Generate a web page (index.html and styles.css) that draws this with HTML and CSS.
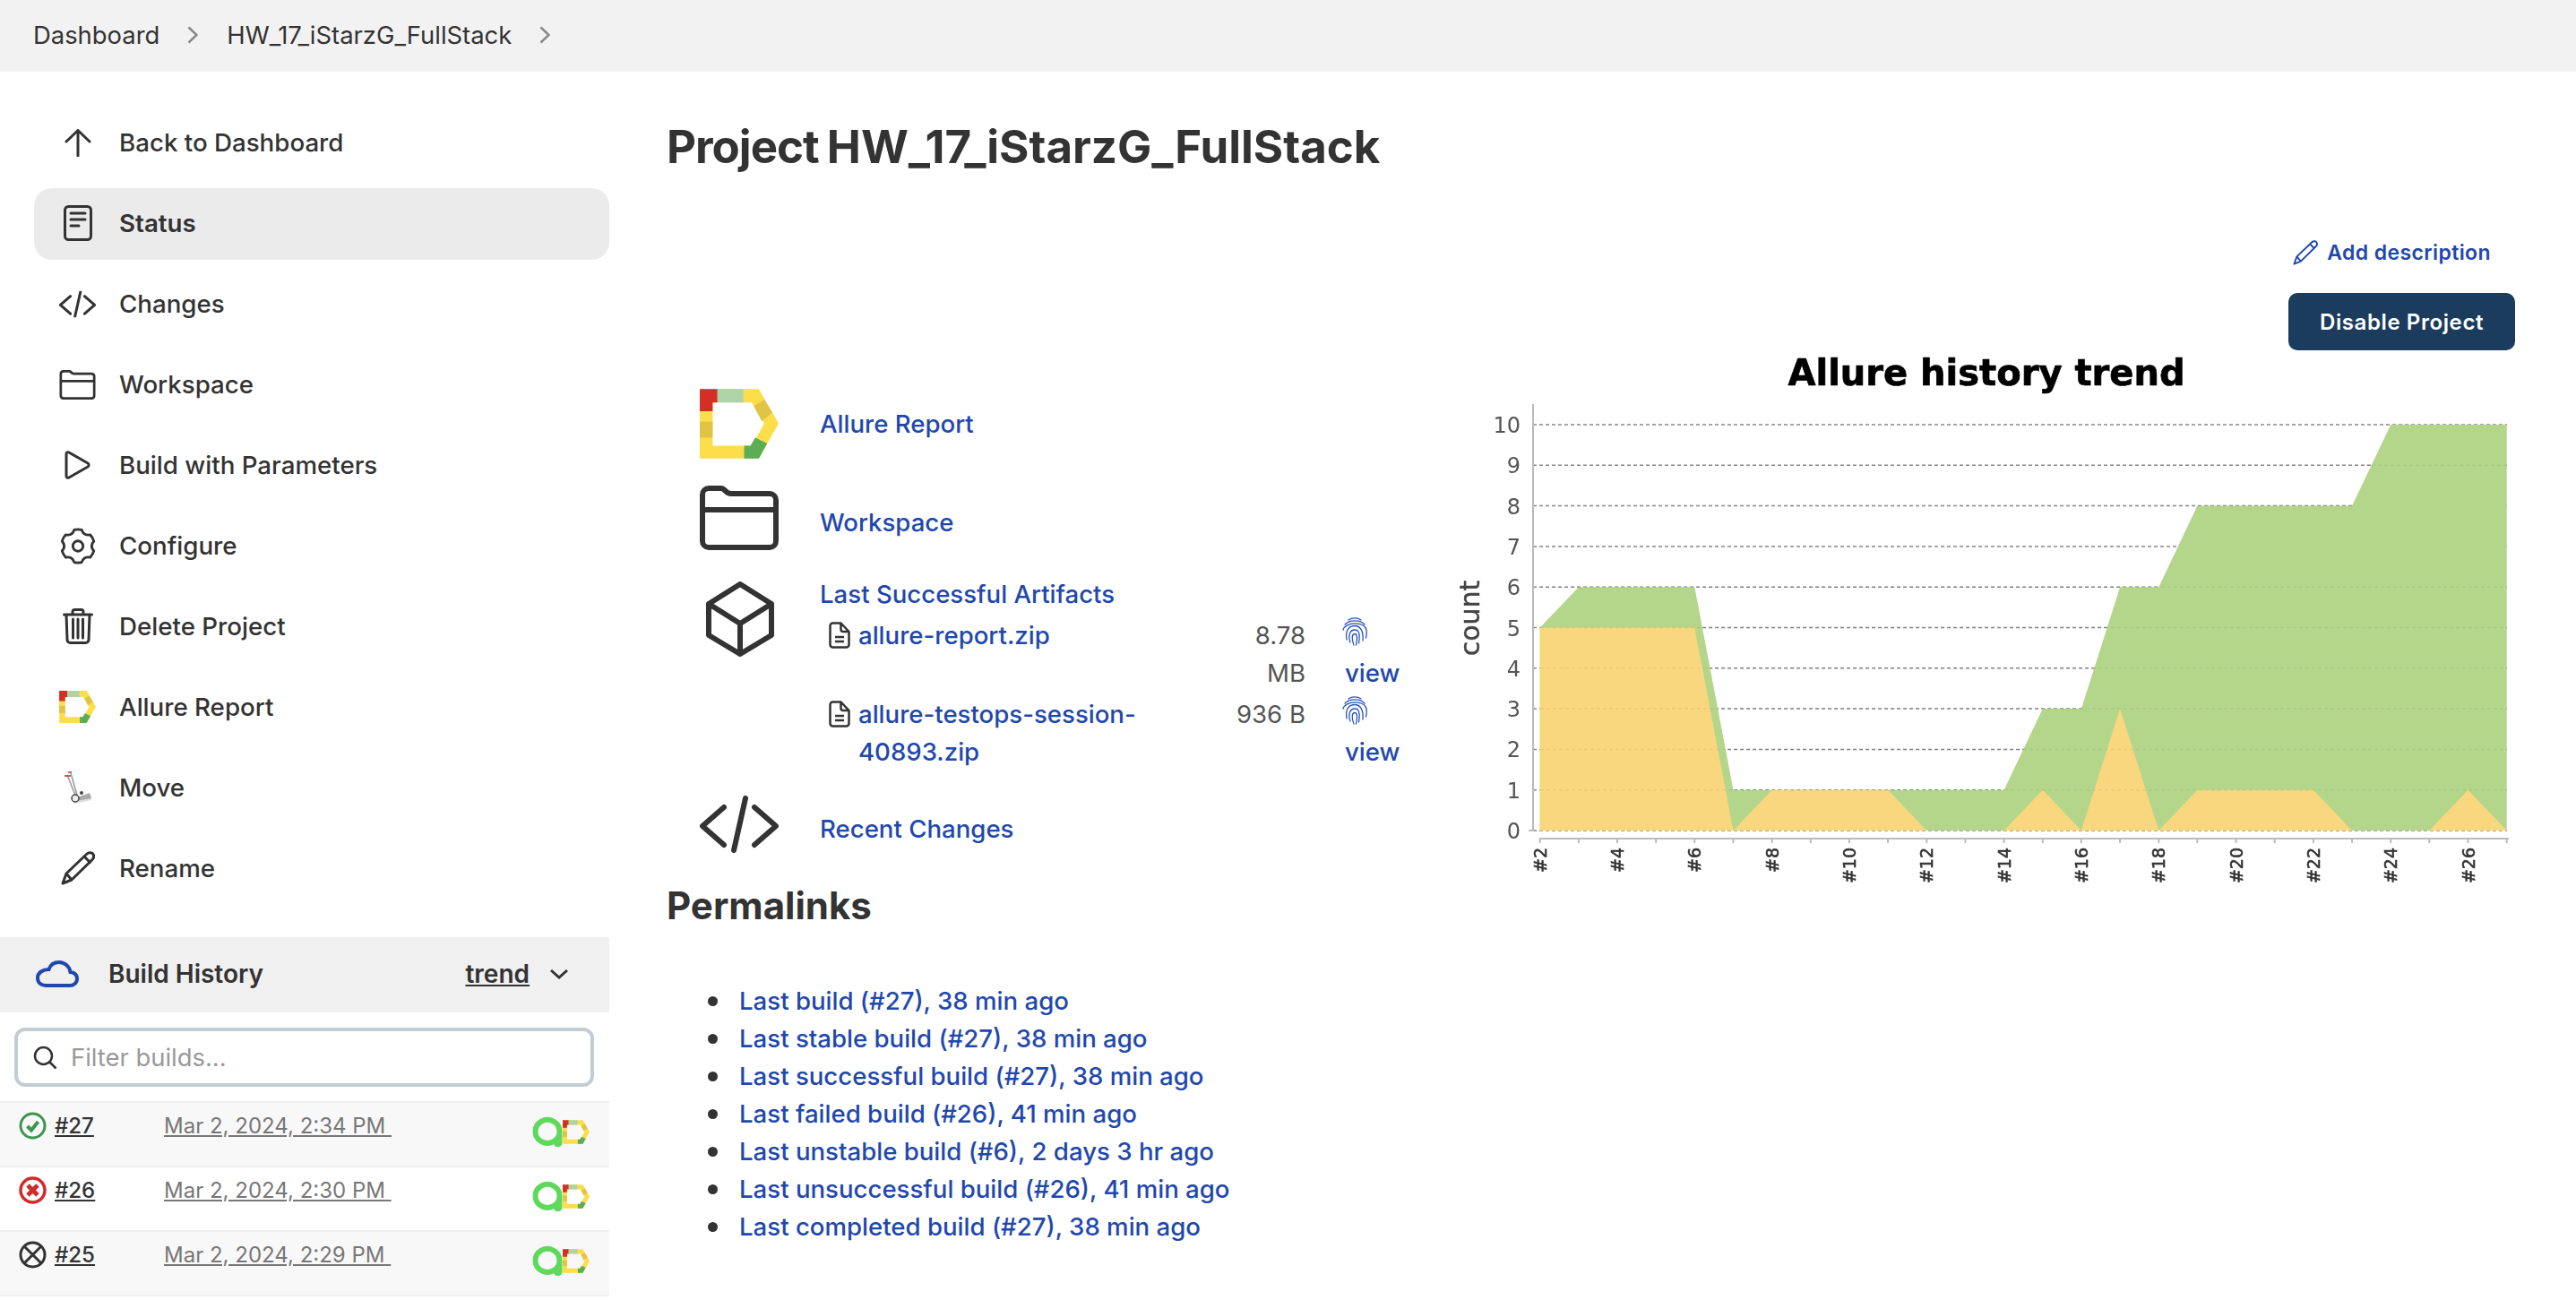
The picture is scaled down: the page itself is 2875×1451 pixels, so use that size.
FILE: index.html
```html
<!DOCTYPE html>
<html lang="en">
<head>
<meta charset="utf-8">
<title>HW_17_iStarzG_FullStack</title>
<link rel="stylesheet" href="styles.css">
</head>
<body>
<svg class="defs" width="0" height="0" aria-hidden="true">
  <defs>
    <symbol id="allure-d" viewBox="65 43 263 232">
      <path class="d-yellow" fill-rule="evenodd" d="M65 43H262L328 158 262 275H65ZM108 88V232H238L280 158 238 88Z"/>
      <path class="d-red" d="M65 43H124V88H108V117H65Z"/>
      <path class="d-pale" d="M124 43H210V88H124Z"/>
      <path class="d-mustard" d="M65 152H108V205H65Z"/>
      <path class="d-mustard" d="M245 100 280 78 308 122 272 150Z"/>
      <path class="d-green" d="M213 232H234L250 205 290 225 262 275H213Z"/>
    </symbol>
    <symbol id="allure-a" viewBox="0 0 34 34">
      <path class="a-ring" d="M30.500 17A13.500 13 0 1 1 30.500 16.900V29a2 2 0 0 1-3 2"/>
    </symbol>
    <symbol id="finger" viewBox="0 0 30 34">
      <g class="finger-lines">
        <path d="M8 4C12 1.200 18 1.200 22 4"/>
        <path d="M4 9C9 3.500 21 3.500 26 9"/>
        <path d="M2 15C4 6 26 5 28 15C28.500 18 28.200 21 27.500 24"/>
        <path d="M6 26C4 15 9 10.500 15 10.500S25 16 24 27"/>
        <path d="M10 29C7 21 10 15 15 15S21 20 19.500 30"/>
        <path d="M14 32C11 25 12 19.500 15 19.500S18 24 16.500 32"/>
      </g>
    </symbol>
    <symbol id="doc" viewBox="0 0 24 30">
      <path class="line-2" d="M13.500 1.500H4.500A3 3 0 0 0 1.500 4.500V25.500A3 3 0 0 0 4.500 28.500H19.500A3 3 0 0 0 22.500 25.500V11ZM13.500 1.500V8.500A2.500 2.500 0 0 0 16 11H22.500M7 17H17M7 22H17"/>
    </symbol>
    <symbol id="pencil" viewBox="0 0 38 38">
      <path d="M2 36 6 25 29 3C31 1 35 1.500 36 3.500S36.500 8 35 9.500L12 32ZM6 25 12 32M26 6 32.500 12.500"/>
    </symbol>
    <symbol id="code" viewBox="0 0 88 64">
      <path d="M27 13 3 34 27 55M61 13 85 34 61 55M51 3 38 61"/>
    </symbol>
    <symbol id="folder" viewBox="0 0 88 72">
      <path d="M10 3H24C28 3 29 9 35 9H78A7 7 0 0 1 85 16V62A7 7 0 0 1 78 69H10A7 7 0 0 1 3 62V10A7 7 0 0 1 10 3ZM3 27H85"/>
    </symbol>
  </defs>
</svg>

<nav class="crumbs">
  <a class="crumb">Dashboard</a>
  <svg class="crumb-arrow" viewBox="0 0 12 20"><path d="M1.500 1.500 10.500 10 1.500 18.500"/></svg>
  <a class="crumb">HW_17_iStarzG_FullStack</a>
  <svg class="crumb-arrow" viewBox="0 0 12 20"><path d="M1.500 1.500 10.500 10 1.500 18.500"/></svg>
</nav>

<div class="page">
  <aside class="side">
    <ul class="tasks">
      <li class="task"><span class="task-icon"><svg class="stroke" width="30" height="31" viewBox="0 0 30 31"><path d="M15 30V2M2 14 15 1.500 28 14"/></svg></span>Back to Dashboard</li>
      <li class="task task-active"><span class="task-icon"><svg class="stroke" width="32" height="40" viewBox="0 0 32 40"><rect x="1.500" y="1.500" width="29" height="37" rx="4"/><path d="M8 9H24M8 16H24M8 23H17"/></svg></span>Status</li>
      <li class="task"><span class="task-icon"><svg class="stroke scaled" width="41" height="31" viewBox="0 0 88 64"><use href="#code"/></svg></span>Changes</li>
      <li class="task"><span class="task-icon"><svg class="stroke scaled" width="41" height="33" viewBox="0 0 88 72"><use href="#folder"/></svg></span>Workspace</li>
      <li class="task"><span class="task-icon"><svg class="stroke" width="29" height="32" viewBox="0 0 29 32"><path d="M2 3.500C2 2 3.500 1.200 5 2L26 14C27.500 15 27.500 17 26 18L5 30C3.500 30.800 2 30 2 28.500Z"/></svg></span>Build with Parameters</li>
      <li class="task"><span class="task-icon"><svg class="stroke" width="40" height="41" viewBox="-1 -1 42 42"><path d="M15.600 1A19.500 19.500 0 0 1 24.400 1Q26.750 8.300 34.260 6.700A19.500 19.500 0 0 1 38.650 14.300Q33.500 20 38.650 25.700A19.500 19.500 0 0 1 34.260 33.300Q26.750 31.700 24.400 39A19.500 19.500 0 0 1 15.600 39Q13.250 31.700 5.740 33.300A19.500 19.500 0 0 1 1.350 25.700Q6.500 20 1.350 14.300A19.500 19.500 0 0 1 5.740 6.700Q13.250 8.300 15.600 1Z"/><circle cx="20" cy="20" r="6"/></svg></span>Configure</li>
      <li class="task"><span class="task-icon"><svg class="stroke" width="34" height="40" viewBox="0 0 34 40"><path d="M1.500 7H32.500M11 7V4A2.500 2.500 0 0 1 13.500 1.500H20.500A2.500 2.500 0 0 1 23 4V7M4 7 5 35A3.500 3.500 0 0 0 8.500 38.500H25.500A3.500 3.500 0 0 0 29 35L30 7M11.500 12V33M17 12V33M22.500 12V33"/></svg></span>Delete Project</li>
      <li class="task"><span class="task-icon"><svg width="41" height="36"><use href="#allure-d"/></svg></span>Allure Report</li>
      <li class="task"><span class="task-icon"><svg width="32" height="38" viewBox="0 0 32 38"><path class="truck-shadow" d="M10 34 30 27 31 33 12 37Z"/><path class="truck-plate" d="M12 31 29 25 31 31 14 34Z"/><path class="truck-frame" d="M8 3 16 31M4 5 14 30"/><path class="truck-red" d="M1 6H8M5 2H9"/><circle class="truck-wheel" cx="13" cy="31" r="4"/><circle class="truck-hub" cx="20" cy="25" r="2"/></svg></span>Move</li>
      <li class="task"><span class="task-icon"><svg class="stroke" width="38" height="38"><use href="#pencil"/></svg></span>Rename</li>
    </ul>

    <section class="history">
      <header class="history-head">
        <svg class="cloud" width="48" height="30" viewBox="0 0 48 30"><path d="M11 28H38C42 28 46 25 46 20.500S43 13.500 38.500 13C37.500 6.500 32 2 26 2 20 2 16 5.500 14.500 10 8 10 2 13.500 2 19.500 2 25 6 28 11 28Z"/></svg>
        <span class="history-title">Build History</span>
        <a class="trend">trend</a>
        <svg class="chev" width="22" height="12" viewBox="0 0 22 12"><path d="M2 2 11 10 20 2"/></svg>
      </header>
      <div class="filter">
        <svg class="search" width="27" height="27" viewBox="0 0 27 27"><circle cx="11.500" cy="11.500" r="9.500"/><path d="M18.500 18.500 25.500 25.500"/></svg>
        <span class="placeholder">Filter builds...</span>
      </div>
      <ul class="builds">
        <li class="build">
          <svg class="status" width="31" height="31" viewBox="0 0 31 31"><circle class="st-ok" cx="15.500" cy="15.500" r="13.500"/><path class="st-ok-mark" d="M9.500 16 14 20.500 21.500 11"/></svg>
          <a class="build-no">#27</a><a class="build-date">Mar 2, 2024, 2:34 PM&nbsp;</a>
          <span class="build-logos"><svg width="34" height="34"><use href="#allure-a"/></svg><svg width="30" height="27"><use href="#allure-d"/></svg></span>
        </li>
        <li class="build">
          <svg class="status" width="31" height="31" viewBox="0 0 31 31"><circle class="st-bad" cx="15.500" cy="15.500" r="13.500"/><path class="st-bad-mark" d="M10 10 21 21M21 10 10 21"/></svg>
          <a class="build-no">#26</a><a class="build-date">Mar 2, 2024, 2:30 PM&nbsp;</a>
          <span class="build-logos"><svg width="34" height="34"><use href="#allure-a"/></svg><svg width="30" height="27"><use href="#allure-d"/></svg></span>
        </li>
        <li class="build">
          <svg class="status" width="31" height="31" viewBox="0 0 31 31"><circle class="st-abort" cx="15.500" cy="15.500" r="13.500"/><path class="st-abort" d="M6 6 25 25M25 6 6 25"/></svg>
          <a class="build-no">#25</a><a class="build-date">Mar 2, 2024, 2:29 PM&nbsp;</a>
          <span class="build-logos"><svg width="34" height="34"><use href="#allure-a"/></svg><svg width="30" height="27"><use href="#allure-d"/></svg></span>
        </li>
      </ul>
    </section>
  </aside>

  <main class="main">
    <h1 class="title"><span class="title-word">Project</span> HW_17_iStarzG_FullStack</h1>
    <div class="actions">
      <a class="add-desc"><svg class="blue-line" width="28" height="28" viewBox="0 0 38 38"><use href="#pencil"/></svg>Add description</a>
      <button class="disable">Disable Project</button>
    </div>
    <div class="content">
      <div class="left">
        <div class="links">
          <div class="link-row row-allure">
            <svg width="88" height="78"><use href="#allure-d"/></svg>
            <a class="link link-allure">Allure Report</a>
          </div>
          <div class="link-row row-work">
            <svg class="stroke bold" width="88" height="72" viewBox="0 0 88 72"><use href="#folder"/></svg>
            <a class="link link-work">Workspace</a>
          </div>
          <div class="link-row row-art">
            <svg class="stroke bold cube" width="78" height="84" viewBox="0 0 78 84"><path d="M39 3 74 25V60L39 81 4 60V25ZM4 25 39 47 74 25M39 47V81"/></svg>
            <div class="art">
              <a class="link">Last Successful Artifacts</a>
              <div class="art-table">
                <svg class="file" width="24" height="30"><use href="#doc"/></svg>
                <a class="link">allure-report.zip</a>
                <span class="size">8.78 MB</span>
                <a class="view link"><svg width="30" height="34"><use href="#finger"/></svg><span>view</span></a>
                <svg class="file" width="24" height="30"><use href="#doc"/></svg>
                <a class="link">allure-testops-session-40893.zip</a>
                <span class="size">936 B</span>
                <a class="view link"><svg width="30" height="34"><use href="#finger"/></svg><span>view</span></a>
              </div>
            </div>
          </div>
          <div class="link-row row-changes">
            <svg class="stroke bold" width="88" height="64"><use href="#code"/></svg>
            <a class="link link-changes">Recent Changes</a>
          </div>
        </div>
        <h2 class="subtitle">Permalinks</h2>
        <ul class="permalinks">
          <li><a class="link">Last build (#27), 38 min ago</a></li>
          <li><a class="link">Last stable build (#27), 38 min ago</a></li>
          <li><a class="link">Last successful build (#27), 38 min ago</a></li>
          <li><a class="link">Last failed build (#26), 41 min ago</a></li>
          <li><a class="link">Last unstable build (#6), 2 days 3 hr ago</a></li>
          <li><a class="link">Last unsuccessful build (#26), 41 min ago</a></li>
          <li><a class="link">Last completed build (#27), 38 min ago</a></li>
        </ul>
      </div>

      <svg class="chart" width="1231" height="625" viewBox="1600 375 1231 625">
        <text class="c-title" x="2217" y="430" text-anchor="middle">Allure history trend</text>
        <path class="c-grid" d="M1711 927H2798M1711 881.700H2798M1711 836.400H2798M1711 791.100H2798M1711 745.800H2798M1711 700.500H2798M1711 655.200H2798M1711 609.900H2798M1711 564.600H2798M1711 519.300H2798M1711 474H2798"/>
        <polygon class="c-green" points="1718.700,700.500 1761.900,655.200 1891.300,655.200 1934.500,881.700 2236.600,881.700 2279.800,791.100 2322.900,791.100 2366.100,655.200 2409.300,655.200 2452.400,564.600 2625.100,564.600 2668.200,474 2797.700,474 2797.700,927 1718.700,927"/>
        <polygon class="c-yellow" points="1718.700,700.500 1891.300,700.500 1934.500,927 1977.700,881.700 2107.100,881.700 2150.300,927 2236.600,927 2279.800,881.700 2322.900,927 2366.100,791.100 2409.300,927 2452.400,881.700 2581.900,881.700 2625.100,927 2711.400,927 2754.500,881.700 2797.700,927 1718.700,927"/>
        <path class="c-grid c-grid-faint" d="M1719 881.700H2798M1719 836.400H2798M1719 791.100H2798M1719 745.800H2798M1719 700.500H2798M1719 655.200H2798M2453 564.600H2625M2640 519.300H2798"/>
        <path class="c-axis" d="M1711 451V928M1718 936H2800M1706 927H1711M1718.700 936V941M1761.900 936V941M1805 936V941M1848.200 936V941M1891.300 936V941M1934.500 936V941M1977.700 936V941M2020.800 936V941M2064 936V941M2107.100 936V941M2150.300 936V941M2193.500 936V941M2236.600 936V941M2279.800 936V941M2322.900 936V941M2366.100 936V941M2409.300 936V941M2452.400 936V941M2495.600 936V941M2538.700 936V941M2581.900 936V941M2625.100 936V941M2668.200 936V941M2711.400 936V941M2754.500 936V941M2797.700 936V941"/>
        <g class="c-y" text-anchor="end">
          <text x="1697" y="936">0</text><text x="1697" y="890.700">1</text><text x="1697" y="845.400">2</text><text x="1697" y="800.100">3</text><text x="1697" y="754.800">4</text><text x="1697" y="709.500">5</text><text x="1697" y="664.200">6</text><text x="1697" y="618.900">7</text><text x="1697" y="573.600">8</text><text x="1697" y="528.300">9</text><text x="1697" y="483">10</text>
        </g>
        <text class="c-count" transform="rotate(-90 1651 690)" x="1651" y="690" text-anchor="middle">count</text>
        <g class="c-x" text-anchor="end">
          <text transform="rotate(-90 1726 946)" x="1726" y="946">#2</text>
          <text transform="rotate(-90 1812 946)" x="1812" y="946">#4</text>
          <text transform="rotate(-90 1898 946)" x="1898" y="946">#6</text>
          <text transform="rotate(-90 1985 946)" x="1985" y="946">#8</text>
          <text transform="rotate(-90 2071 946)" x="2071" y="946">#10</text>
          <text transform="rotate(-90 2157 946)" x="2157" y="946">#12</text>
          <text transform="rotate(-90 2244 946)" x="2244" y="946">#14</text>
          <text transform="rotate(-90 2330 946)" x="2330" y="946">#16</text>
          <text transform="rotate(-90 2416 946)" x="2416" y="946">#18</text>
          <text transform="rotate(-90 2503 946)" x="2503" y="946">#20</text>
          <text transform="rotate(-90 2589 946)" x="2589" y="946">#22</text>
          <text transform="rotate(-90 2675 946)" x="2675" y="946">#24</text>
          <text transform="rotate(-90 2762 946)" x="2762" y="946">#26</text>
        </g>
      </svg>
    </div>
  </main>
</div>
</body>
</html>
```

FILE: styles.css
```css
* { box-sizing: border-box; }
html, body { margin: 0; height: 1451px; overflow: hidden; background: #fff; }
body { font-family: Inter, "Noto Sans", sans-serif; color: #333; font-size: 28px; }
ul { margin: 0; padding: 0; list-style: none; }
svg { display: block; flex: none; }
.defs { position: absolute; }

.stroke { fill: none; stroke: #333; stroke-width: 3px; stroke-linecap: round; stroke-linejoin: round; }
.stroke.bold { stroke-width: 6px; }
.stroke.scaled { stroke-width: 6.500px; }
.blue-line { fill: none; stroke: #1f48ae; stroke-width: 2.600px; stroke-linejoin: round; }

.d-yellow { fill: #fcdd4a; }
.d-red { fill: #d32f27; }
.d-pale { fill: #aed3a8; }
.d-mustard { fill: #dfc446; }
.d-green { fill: #5bae55; }
.a-ring { fill: none; stroke: #5fd95c; stroke-width: 6px; stroke-linecap: round; }
.finger-lines { fill: none; stroke: #2a55bb; stroke-width: 1.300px; stroke-linecap: round; }
.line-2 { fill: none; stroke: #333; stroke-width: 2.500px; stroke-linejoin: round; }

.crumbs { height: 80px; background: #f2f2f2; display: flex; align-items: center; padding: 0 0 2px 37px; font-size: 27.400px; }
.crumb { color: #333; }
.crumb-arrow { width: 12px; height: 20px; margin: 0 32px 0 31px; fill: none; stroke: #888; stroke-width: 2.500px; }

.page { display: flex; align-items: flex-start; }
.side { width: 680px; flex: none; padding-top: 40px; }
.tasks { display: flex; flex-direction: column; gap: 10px; margin-left: 38px; }
.task { height: 80px; display: flex; align-items: center; padding: 0 0 2px 28px; border-radius: 20px; font-weight: 500; font-size: 27.700px; }
.task-active { background: #ebebeb; font-weight: 600; }
.task-icon { width: 41px; margin-right: 26px; display: flex; justify-content: center; }
.truck-shadow { fill: #ddd; }
.truck-plate { fill: #aaa; }
.truck-frame { fill: none; stroke: #999; stroke-width: 1.500px; }
.truck-red { fill: none; stroke: #b33; stroke-width: 1.500px; }
.truck-wheel { fill: #eee; stroke: #444; stroke-width: 1.500px; }
.truck-hub { fill: #444; }

.history { margin-top: 36px; }
.history-head { height: 84px; background: #f0f0f0; display: flex; align-items: center; padding: 0 0 2px 40px; }
.cloud { fill: none; stroke: #1f48ae; stroke-width: 4px; margin-right: 33px; }
.history-title { font-weight: 600; font-size: 28px; flex: 1; }
.trend { font-weight: 600; font-size: 28px; text-decoration: underline; margin-right: 22px; }
.chev { fill: none; stroke: #333; stroke-width: 3px; margin-right: 45px; }
.filter { margin: 17px 17px 18px 16px; height: 66px; border: 4px solid #c3ccd1; border-radius: 12px; display: flex; align-items: center; padding-left: 17px; background: #fff; }
.search { fill: none; stroke: #333; stroke-width: 2.500px; margin-right: 15px; }
.placeholder { color: #999; font-size: 27.400px; }
.builds { display: flex; flex-direction: column; }
.build { height: 74px; display: flex; align-items: flex-start; padding: 10px 22px 0 21px; border-bottom: 2px solid #f0f0f0; border-top: 2px solid #f0f0f0; margin-top: -2px; }
.build:nth-child(odd) { background: #f8f8f8; }
.status { margin-right: 9px; }
.st-ok { fill: none; stroke: #3c9650; stroke-width: 3px; }
.st-ok-mark { fill: none; stroke: #3c9650; stroke-width: 4px; }
.st-bad { fill: none; stroke: #d12c2c; stroke-width: 3.500px; }
.st-bad-mark { fill: none; stroke: #d12c2c; stroke-width: 5px; }
.st-abort { fill: none; stroke: #333; stroke-width: 3px; }
.build-no { font-size: 24px; font-weight: 500; text-decoration: underline; line-height: 32px; width: 122px; }
.build-date { font-size: 24px; color: #777; text-decoration: underline; line-height: 32px; flex: 1; white-space: nowrap; }
.build-logos { display: flex; align-items: center; margin-top: 5px; }

.main { flex: 1; min-width: 0; padding: 52px 68px 0 64px; }
.title { margin: 0; font-size: 51px; line-height: 64px; font-weight: 700; color: #333; word-spacing: -3px; }
.title-word { letter-spacing: -1px; }
.actions { display: flex; flex-direction: column; align-items: flex-end; margin-top: 66px; }
.add-desc { display: flex; align-items: center; gap: 10px; height: 40px; padding-right: 27px; color: #1f48ae; font-size: 23px; font-weight: 600; letter-spacing: .4px; }
.disable { margin: 25px 0 0; width: 253px; height: 64px; border: 0; border-radius: 10px; background: #1b3c5c; color: #fff; font: 600 24px Inter, sans-serif; letter-spacing: .6px; }

.content { display: flex; margin-top: 4px; align-items: flex-start; }
.left { width: 856px; flex: none; }
.links { padding: 39px 0 0 37px; }
.link-row { display: grid; grid-template-columns: 134px 1fr; }
.link { color: #1f48ae; font-weight: 500; font-size: 27.600px; }
.row-work { margin-top: 30px; }
.row-art { margin-top: 37px; }
.row-changes { margin-top: 28px; }
.cube { margin: -2px 0 0 6px; }
.link-allure { line-height: 78px; }
.link-work { line-height: 42px; padding-top: 20px; }
.link-changes { line-height: 42px; padding-top: 16px; }
.art { line-height: 42px; margin-top: -9px; }
.art > .link { display: block; }
.art-table { display: grid; grid-template-columns: 43px 419px 80px 103px; row-gap: 4px; line-height: 42px; margin-top: 4px; }
.file { margin: 6px 0 0 10px; }
.size { text-align: right; color: #555; font-size: 27.600px; }
.view { padding-left: 44px; line-height: 42px; }
.view svg { margin: 0 0 9px -4px; height: 34px; }
.view span { display: block; margin-top: -1px; }

.subtitle { margin: 34px 0 0; font-size: 42px; line-height: 50px; font-weight: 700; }
.permalinks { margin-top: 60px; padding-left: 46px; line-height: 42px; }
.permalinks li { display: flex; align-items: center; height: 42px; }
.permalinks li::before { content: ""; width: 11px; height: 11px; border-radius: 50%; background: #333; margin-right: 24px; }

.chart { margin: -20px 0 0; filter: blur(.5px); }
.c-title { font: 700 40px "DejaVu Sans", sans-serif; fill: #000; stroke: #000; stroke-width: .7px; }
.c-grid { fill: none; stroke: #888; stroke-width: 1.500px; stroke-dasharray: 4 3; }
.c-grid-faint { stroke: #000; opacity: .06; }
.c-green { fill: #b4d68b; }
.c-yellow { fill: #f9d77e; }
.c-axis { fill: none; stroke: #bbb; stroke-width: 2px; }
.c-y { font: 24px "DejaVu Sans", sans-serif; fill: #555; }
.c-x { font: 19px "DejaVu Sans", sans-serif; fill: #333; stroke: #333; stroke-width: .6px; }
.c-count { font: 30px "DejaVu Sans", sans-serif; fill: #444; stroke: #444; stroke-width: .4px; }
```
